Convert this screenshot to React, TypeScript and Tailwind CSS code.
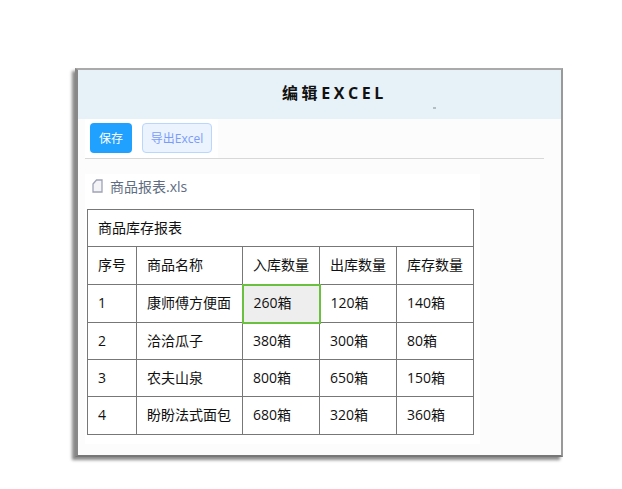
const font = "[font-family:'Open_Sans','Noto_Sans_CJK_SC',sans-serif]";

const rows = [
  ["1", "康师傅方便面", "260箱", "120箱", "140箱"],
  ["2", "洽洽瓜子", "380箱", "300箱", "80箱"],
  ["3", "农夫山泉", "800箱", "650箱", "150箱"],
  ["4", "盼盼法式面包", "680箱", "320箱", "360箱"],
];

const cell = "border border-[#777] px-[10px] pb-[2px] text-left font-normal";

export default function App() {
  return (
    <div className={`w-[622px] h-[489px] bg-white pt-[68px] pl-[75px] overflow-hidden ${font}`}>
      <div className="relative w-[488px] h-[389px] bg-[#fcfcfc] border-t-2 border-r-2 border-b-2 border-l-[3px] border-t-[#aaa] border-r-[#999] border-b-[#777] border-l-[#888] shadow-[-3px_3px_3px_#8a8a8a]">
        <div className="h-[49px] bg-[#e6f1f8] flex items-center justify-center pl-[30px]">
          <h1 className="text-[16px] leading-[20px] font-bold tracking-[3.6px] text-[#111] mt-[-3px]">编辑EXCEL</h1>
        </div>
        <span className="absolute left-[355px] top-[37px] w-[3px] h-[2px] bg-[#b5bcc2]" />

        <div className="ml-[7px] w-[459px] h-[40px] border-b border-[#d8d8d8] flex">
          <div className="bg-white w-[133px] flex gap-[10px] pl-[5px] pt-[4px]">
            <button className="w-[42px] h-[30px] shrink-0 rounded-[4px] bg-[#20a0ff] text-white text-[12px] leading-[30px] pt-[1px]">保存</button>
            <button className="w-[70px] h-[30px] shrink-0 rounded-[4px] border border-[#b9d6ff] bg-[#ebf3ff] text-[#7a9cf8] text-[12px] leading-[28px] pt-[1px]">导出Excel</button>
          </div>
        </div>

        <div className="ml-[7px] mt-[15px] w-[395px] h-[270px] bg-white pl-[2px]">
          <div className="h-[35px] flex items-center pl-[5px] pb-[11px] gap-[7px] text-[14px] text-[#5e6d82]">
            <svg width="11" height="14" viewBox="0 0 11 14" fill="none" className="shrink-0">
              <path d="M1 5 L4.5 1 H10 V13 H1 Z" fill="#f4f4f6" stroke="#9ea3b6" strokeWidth="1.3" />
            </svg>
            <span>商品报表.xls</span>
          </div>

          <table className="table-fixed border-collapse w-[387px] text-[14px] text-[#111]">
            <colgroup>
              <col className="w-[49px]" />
              <col className="w-[106px]" />
              <col className="w-[77px]" />
              <col className="w-[77px]" />
              <col className="w-[77px]" />
            </colgroup>
            <tbody>
              <tr className="h-[37px]">
                <td colSpan={5} className={cell}>商品库存报表</td>
              </tr>
              <tr className="h-[38px]">
                <td className={cell}>序号</td>
                <td className={cell}>商品名称</td>
                <td className={cell}>入库数量</td>
                <td className={cell}>出库数量</td>
                <td className={cell}>库存数量</td>
              </tr>
              {rows.map((row, i) => (
                <tr key={row[0]} className={i === 0 || i === 3 ? "h-[38px]" : "h-[37px]"}>
                  {row.map((v, j) => (
                    <td
                      key={j}
                      className={
                        i === 0 && j === 2
                          ? "border-2 border-[#6cc040] bg-[#eeeeee] px-[10px] pb-[2px] text-left"
                          : cell
                      }
                    >
                      {v}
                    </td>
                  ))}
                </tr>
              ))}
            </tbody>
          </table>
        </div>
      </div>
    </div>
  );
}
